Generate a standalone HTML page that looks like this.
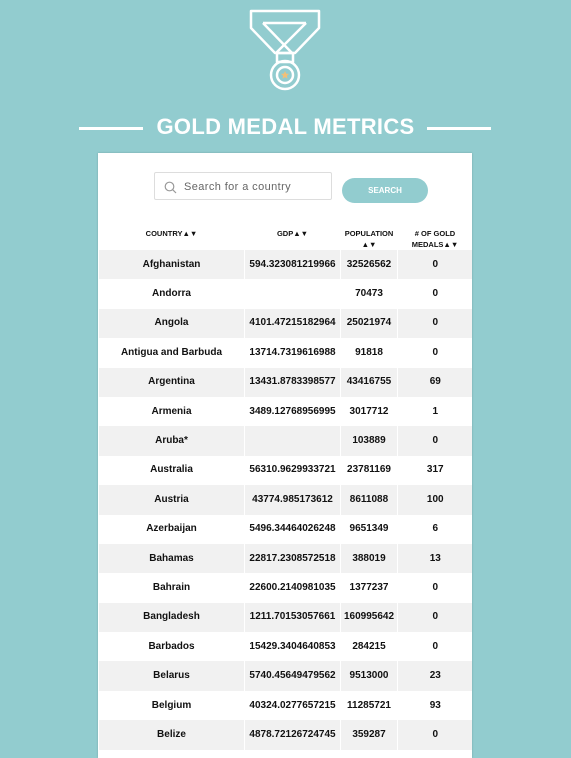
<!DOCTYPE html>
<html><head><meta charset="utf-8"><style>
html,body{margin:0;width:571px;height:758px;overflow:hidden}
body{background:#92cccf;font-family:"Liberation Sans",sans-serif;position:relative}
.title{position:absolute;top:114px;left:0;width:571px;text-align:center;color:#fff;font-weight:bold;font-size:22px;letter-spacing:0.3px}
.line{position:absolute;top:127px;height:3px;background:#fff}
.card{position:absolute;left:98px;top:153px;width:374px;height:605px;background:#fff;box-shadow:0 0 2px rgba(0,0,0,.2);overflow:hidden}
.search{position:absolute;left:56px;top:19px;width:178px;height:28px;border:1px solid #ddd;border-radius:2px;box-sizing:border-box;font-size:11px;color:#666;line-height:28px;padding-left:29px;letter-spacing:0.4px}
.btn{position:absolute;left:244px;top:25px;width:86px;height:25px;border-radius:13px;background:#92cccf;color:#fff;font-size:8px;font-weight:bold;text-align:center;line-height:25px}
table{position:absolute;left:0;top:70px;border-collapse:collapse;width:374px;table-layout:fixed}
th{font-size:7.5px;font-weight:bold;color:#111;height:27px;vertical-align:top;padding:5px 0 0;line-height:11px;box-sizing:border-box}
td{font-size:10px;font-weight:bold;color:#111;text-align:center;height:29.4px;padding:0;border-left:1px solid #fff;line-height:12px;box-sizing:border-box}
tr{height:29.4px}
tr:first-child{height:27px}
tr:nth-child(even) td{background:#f1f1f1}
</style></head><body>
<svg style="position:absolute;left:0;top:0" width="571" height="100" fill="none" stroke="#fff" stroke-width="2.5" stroke-linejoin="round">
<path d="M251 11H319V28L295 53H275L251 28Z"/>
<path d="M263 23H306"/>
<path d="M263 23L292 53"/><path d="M306 23L276 53"/>
<rect x="277" y="53" width="16" height="9"/>
<circle cx="285" cy="75" r="14"/><circle cx="285" cy="75" r="8"/>
<path d="M285 71l1.2 2.6 2.8.3-2.1 1.9.6 2.8-2.5-1.5-2.5 1.5.6-2.8-2.1-1.9 2.8-.3z" fill="#f0c078" stroke="none"/>
</svg>
<div class="line" style="left:79px;width:64px"></div>
<div class="line" style="left:427px;width:64px"></div>
<div class="title">GOLD MEDAL METRICS</div>
<div class="card">
<div class="search"><svg style="position:absolute;left:9px;top:8px" width="13" height="13" fill="none" stroke="#999" stroke-width="1.2"><circle cx="5.5" cy="5.5" r="4.3"/><path d="M8.7 8.7L12 12"/></svg>Search for a country</div>
<div class="btn">SEARCH</div>
<table>
<colgroup><col style="width:146px"><col style="width:96px"><col style="width:57px"><col style="width:75px"></colgroup>
<tr><th>COUNTRY▲▼</th><th>GDP▲▼</th><th>POPULATION<br>▲▼</th><th># OF GOLD<br>MEDALS▲▼</th></tr>
<tr><td>Afghanistan</td><td>594.323081219966</td><td>32526562</td><td>0</td></tr>
<tr><td>Andorra</td><td></td><td>70473</td><td>0</td></tr>
<tr><td>Angola</td><td>4101.47215182964</td><td>25021974</td><td>0</td></tr>
<tr><td>Antigua and Barbuda</td><td>13714.7319616988</td><td>91818</td><td>0</td></tr>
<tr><td>Argentina</td><td>13431.8783398577</td><td>43416755</td><td>69</td></tr>
<tr><td>Armenia</td><td>3489.12768956995</td><td>3017712</td><td>1</td></tr>
<tr><td>Aruba*</td><td></td><td>103889</td><td>0</td></tr>
<tr><td>Australia</td><td>56310.9629933721</td><td>23781169</td><td>317</td></tr>
<tr><td>Austria</td><td>43774.985173612</td><td>8611088</td><td>100</td></tr>
<tr><td>Azerbaijan</td><td>5496.34464026248</td><td>9651349</td><td>6</td></tr>
<tr><td>Bahamas</td><td>22817.2308572518</td><td>388019</td><td>13</td></tr>
<tr><td>Bahrain</td><td>22600.2140981035</td><td>1377237</td><td>0</td></tr>
<tr><td>Bangladesh</td><td>1211.70153057661</td><td>160995642</td><td>0</td></tr>
<tr><td>Barbados</td><td>15429.3404640853</td><td>284215</td><td>0</td></tr>
<tr><td>Belarus</td><td>5740.45649479562</td><td>9513000</td><td>23</td></tr>
<tr><td>Belgium</td><td>40324.0277657215</td><td>11285721</td><td>93</td></tr>
<tr><td>Belize</td><td>4878.72126724745</td><td>359287</td><td>0</td></tr>
<tr><td>Benin</td><td></td><td></td><td>0</td></tr>
</table>
</div>
</body></html>
